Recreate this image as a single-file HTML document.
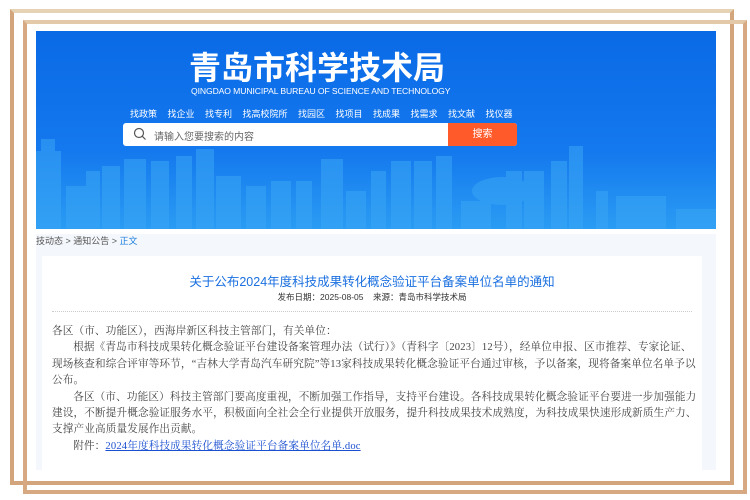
<!DOCTYPE html>
<html><head><meta charset="utf-8"><style>
*{margin:0;padding:0;box-sizing:border-box}
body{width:750px;height:500px;background:#fff;position:relative;overflow:hidden;font-family:"Liberation Sans","Noto Sans CJK SC",sans-serif}
.fa{position:absolute;left:10px;top:9px;width:724px;height:476px;border:4px solid #d3a57c;border-top-color:#e6d2b5}
.fb{position:absolute;left:23px;top:20px;width:724px;height:474px;border:4px solid #d6a983;border-top-color:#e3c9a8}
.ban{position:absolute;left:36px;top:31px;width:680px;height:198px;background:linear-gradient(180deg,#0a6ae6 0%,#1478ee 60%,#2a9cf3 100%);overflow:hidden}
.t1{position:absolute;left:153px;top:19px;color:#fff;font-size:32px;line-height:1;font-weight:bold;font-family:"Noto Sans CJK SC",sans-serif}
.t2{position:absolute;left:155px;top:55px;color:#fff;font-size:8.6px;letter-spacing:-.1px}
.nav{position:absolute;left:94px;top:76px;color:#fff;font-size:9px;word-spacing:8px;white-space:nowrap}
.sb{position:absolute;left:87px;top:92px;width:394px;height:23px;background:#fff;border-radius:3px;overflow:hidden}
.sb span{position:absolute;left:31px;top:5px;font-size:10px;color:#666}
.sb b{position:absolute;right:0;top:0;width:69px;height:23px;background:#ff5a2a;color:#fff;font-weight:normal;font-size:10px;text-align:center;line-height:23px}
.city{position:absolute;left:0;bottom:0}
.bc{position:absolute;left:36px;top:234px;width:680px;height:18px;font-size:9px;color:#555;background:#f4f7fb}
.bc i{font-style:normal;color:#1a7fe0}
.ct{position:absolute;left:36px;top:252px;width:680px;height:218px;background:#f4f7fb}
.pn{position:absolute;left:6px;top:4px;width:660px;height:214px;background:#fff}
.tt{position:absolute;left:0;width:100%;top:15px;text-align:center;color:#1a6fe0;font-size:12.5px}
.mt{position:absolute;left:0;width:100%;top:35px;text-align:center;color:#333;font-size:8.5px}
.hr{position:absolute;left:10px;right:10px;top:55px;border-top:1px dotted #ccc}
.bd{position:absolute;left:10px;top:68px;width:646px;font-family:"Liberation Serif","Noto Serif CJK SC",serif;font-size:10.6px;line-height:16.4px;color:#444;letter-spacing:.15px}
.bd p{text-indent:2em}
.bd a{color:#1a4fd0;text-decoration:underline}
</style></head><body>
<div class="fa"></div><div class="fb"></div>
<div class="ban">
<svg class="city" width="680" height="198" viewBox="0 0 680 198">
<g fill="#3aa6f5" opacity=".55">
<rect x="0" y="120" width="25" height="78"/><rect x="5" y="108" width="14" height="20"/>
<rect x="30" y="155" width="20" height="43"/><rect x="50" y="140" width="14" height="58"/>
<rect x="66" y="135" width="18" height="63"/><rect x="88" y="128" width="22" height="70"/>
<rect x="115" y="130" width="18" height="68"/><rect x="140" y="125" width="16" height="73"/>
<rect x="160" y="118" width="18" height="80"/><rect x="180" y="145" width="25" height="53"/>
<rect x="210" y="155" width="20" height="43"/><rect x="235" y="150" width="20" height="48"/>
<rect x="260" y="150" width="16" height="48"/><rect x="285" y="128" width="22" height="70"/>
<rect x="310" y="160" width="20" height="38"/><rect x="335" y="140" width="15" height="58"/>
<rect x="355" y="130" width="20" height="68"/><rect x="378" y="130" width="18" height="68"/>
<rect x="400" y="125" width="16" height="73"/><rect x="425" y="170" width="30" height="28"/>
<rect x="470" y="140" width="16" height="58"/><rect x="488" y="140" width="20" height="58"/>
<rect x="515" y="130" width="16" height="68"/><rect x="533" y="115" width="14" height="83"/>
<rect x="560" y="160" width="12" height="38"/><rect x="580" y="165" width="50" height="33"/>
<rect x="640" y="178" width="40" height="20"/>
<ellipse cx="466" cy="160" rx="30" ry="14"/>
</g></svg>
<div class="t1">青岛市科学技术局</div>
<div class="t2">QINGDAO MUNICIPAL BUREAU OF SCIENCE AND TECHNOLOGY</div>
<div class="nav">找政策 找企业 找专利 找高校院所 找园区 找项目 找成果 找需求 找文献 找仪器</div>
<div class="sb"><svg style="position:absolute;left:10px;top:4px" width="14" height="14"><circle cx="6" cy="6" r="4.5" fill="none" stroke="#555" stroke-width="1.2"/><line x1="9.3" y1="9.3" x2="12.5" y2="12.5" stroke="#555" stroke-width="1.2"/></svg><span>请输入您要搜索的内容</span><b>搜索</b></div>
</div>
<div class="bc">技动态 &gt; 通知公告 &gt; <i>正文</i></div>
<div class="ct"><div class="pn">
<div class="tt">关于公布2024年度科技成果转化概念验证平台备案单位名单的通知</div>
<div class="mt">发布日期：2025-08-05 &nbsp;&nbsp; 来源：青岛市科学技术局</div>
<div class="hr"></div>
<div class="bd">
<div>各区（市、功能区），西海岸新区科技主管部门，有关单位：</div>
<p>根据《青岛市科技成果转化概念验证平台建设备案管理办法（试行）》（青科字〔2023〕12号），经单位申报、区市推荐、专家论证、现场核查和综合评审等环节，“吉林大学青岛汽车研究院”等13家科技成果转化概念验证平台通过审核，予以备案，现将备案单位名单予以公布。</p>
<p>各区（市、功能区）科技主管部门要高度重视，不断加强工作指导，支持平台建设。各科技成果转化概念验证平台要进一步加强能力建设，不断提升概念验证服务水平，积极面向全社会全行业提供开放服务，提升科技成果技术成熟度，为科技成果快速形成新质生产力、支撑产业高质量发展作出贡献。</p>
<p>附件：<a>2024年度科技成果转化概念验证平台备案单位名单.doc</a></p>
</div>
</div></div>
</body></html>
